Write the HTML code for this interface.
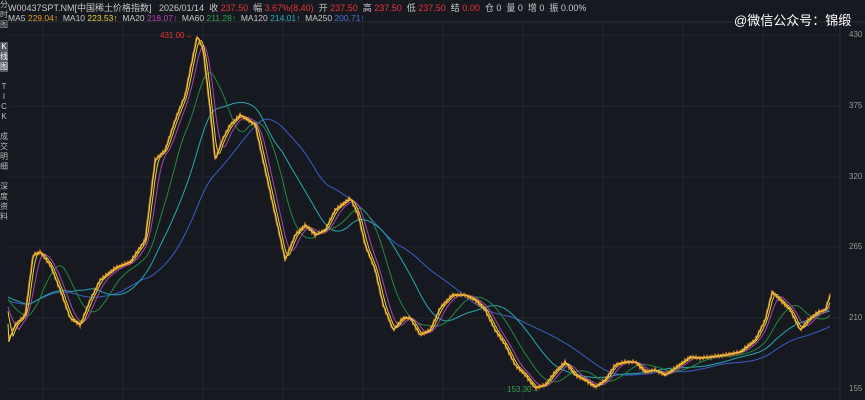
<!DOCTYPE html>
<html><head><meta charset="utf-8"><style>
html,body{margin:0;padding:0;background:#16191f;width:865px;height:400px;overflow:hidden;font-family:"Liberation Sans","Noto Sans CJK SC",sans-serif;}
#t{position:absolute;left:8px;top:1px;font-size:9px;color:#c8c8c8;white-space:nowrap;}
#m{position:absolute;left:8px;top:13px;font-size:8.5px;color:#c8c8c8;white-space:nowrap;}
.r{color:#e8343a}.o{color:#e89a2e}.y{color:#e8d23a}.p{color:#c040c0}.g{color:#2ea04a}.c{color:#2ab0b8}.b{color:#4a70d8}
#side{position:absolute;left:0;top:0;width:8px;font-size:8px;color:#bbb;line-height:10px;text-align:center;}
#wm{position:absolute;left:734px;top:10px;font-size:13px;color:#fff;}
.ax{position:absolute;left:849px;font-size:8px;color:#999;}
svg{position:absolute;left:0;top:0}
</style></head><body>
<svg id="s" width="865" height="400"></svg>
<div id="t">W00437SPT.NM[中国稀土价格指数] &nbsp; 2026/01/14 &nbsp;收 <span class="r">237.50</span> &nbsp;幅 <span class="r">3.67%(8.40)</span> &nbsp;开 <span class="r">237.50</span> &nbsp;高 <span class="r">237.50</span> &nbsp;低 <span class="r">237.50</span> &nbsp;结 <span class="r">0.00</span> &nbsp;仓 0 &nbsp;量 0 &nbsp;增 0 &nbsp;振 0.00%</div>
<div id="m">MA5 <span class="o">229.04↑</span> &nbsp;MA10 <span class="y">223.53↑</span> &nbsp;MA20 <span class="p">218.07↑</span> &nbsp;MA60 <span class="g">211.28↑</span> &nbsp;MA120 <span class="c">214.01↑</span> &nbsp;MA250 <span class="b">200.71↑</span></div>
<div id="side">分<br>时<br>图<br><div style="background:#555a66;color:#fff;margin-top:12px">K<br>线<br>图</div><br>T<br>I<br>C<br>K<br><br>成<br>交<br>明<br>细<br><br>深<br>度<br>资<br>料</div>
<div id="wm">@微信公众号：锦缎</div>
<div class="ax" style="top:30px">430</div><div class="ax" style="top:101px">375</div><div class="ax" style="top:172px">320</div><div class="ax" style="top:242px">265</div><div class="ax" style="top:313px">210</div><div class="ax" style="top:384px">155</div>
<div style="position:absolute;left:160px;top:31px;font-size:8px;color:#e8343a">431.00→</div>
<div style="position:absolute;left:507px;top:385px;font-size:8px;color:#2ea04a">153.30→</div>
<script>
var pts=[[8,342],[15,325],[25,315],[33,255],[40,252],[50,265],[60,290],[70,318],[80,325],[90,300],[100,280],[115,268],[130,262],[145,240],[155,160],[165,150],[175,120],[185,95],[190,70],[197,36],[203,50],[210,110],[215,160],[222,140],[230,125],[240,115],[255,125],[265,170],[275,215],[285,260],[295,235],[305,225],[315,235],[325,230],[335,210],[350,198],[358,215],[365,245],[375,270],[383,305],[393,330],[403,318],[410,318],[420,335],[430,330],[440,308],[452,295],[465,295],[475,300],[485,310],[495,330],[505,345],[515,365],[525,375],[535,388],[545,385],[555,372],[565,362],[575,375],[585,380],[595,387],[605,380],[615,365],[625,362],[635,362],[645,372],[655,370],[665,375],[675,368],[690,357],[700,358],[710,357],[725,355],[740,352],[755,340],[765,320],[772,292],[780,300],[790,310],[800,330],[808,320],[818,312],[825,310],[830,295]];
var ys=[];for(var x=8;x<=830;x++){for(var i=0;i<pts.length-1;i++){if(x>=pts[i][0]&&x<=pts[i+1][0]){var f=(x-pts[i][0])/(pts[i+1][0]-pts[i][0]);ys.push(pts[i][1]+f*(pts[i+1][1]-pts[i][1])+Math.sin(x*2.3)*1.5);break;}}}
var pre=[];for(var k=0;k<200;k++)pre.push(300+Math.sin(k/15)*10);
var all=pre.concat(ys);
function ma(n){var o=[];for(var i=200;i<all.length;i++){var s=0;for(var j=0;j<n;j++)s+=all[i-j];o.push(s/n);}return o;}
function path(a,c,w){var d='';for(var i=0;i<a.length;i++)d+=(i?'L':'M')+(i+8)+' '+a[i].toFixed(1);return '<path d="'+d+'" fill="none" stroke="'+c+'" stroke-width="'+w+'"/>';}
var h='';
for(var gx=43;gx<840;gx+=80)h+='<line x1="'+gx+'" y1="22" x2="'+gx+'" y2="400" stroke="#21252c" stroke-width="1"/>';
[35,106,177,247,318,389].forEach(function(y){h+='<line x1="10" y1="'+y+'" x2="840" y2="'+y+'" stroke="#21252c"/>';});
h+='<line x1="10" y1="22" x2="865" y2="22" stroke="#2a2e36"/>';
h+='<line x1="840" y1="22" x2="840" y2="400" stroke="#2a2e36"/>';
h+=path(ma(115),'#3a5ec8',1)+path(ma(65),'#2aa8b0',1)+path(ma(32),'#24883c',1)+path(ma(12),'#b040b0',1)+path(ma(6),'#e8d23a',1);
h+=path(ys,'#c8782a',1.6)+path(ma(2),'#f0d040',1);
document.getElementById('s').innerHTML=h;
</script>
</body></html>
